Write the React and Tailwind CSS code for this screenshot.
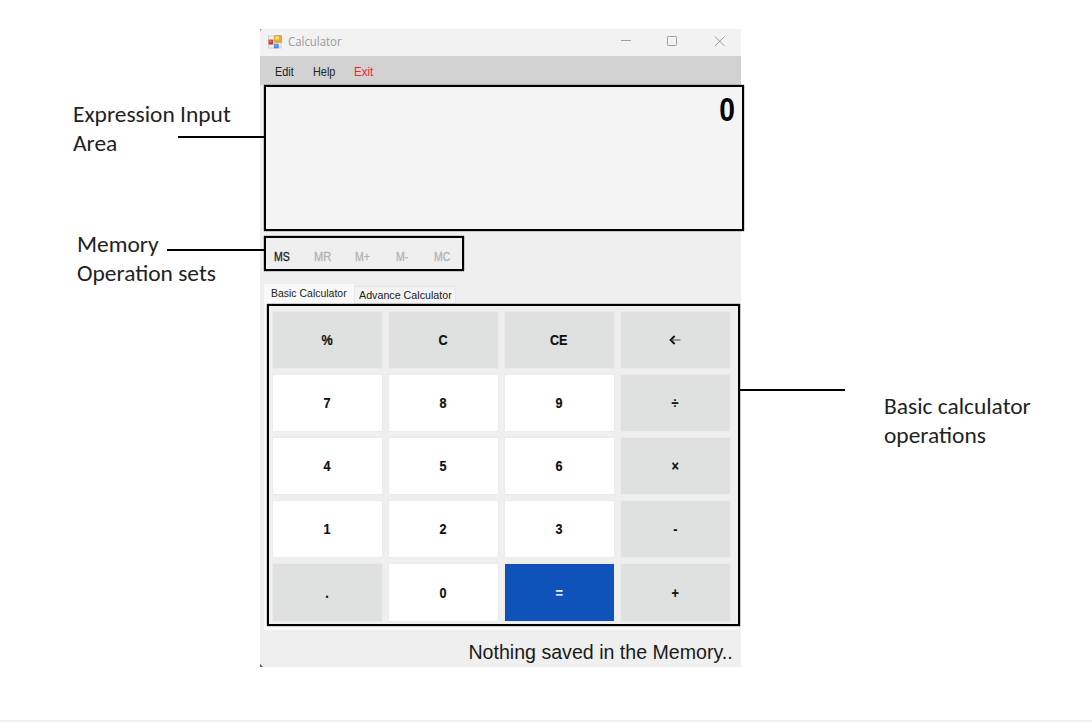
import React from "react";

const keys = [
  ["%", "op"], ["C", "op"], ["CE", "op"], ["←", "back"],
  ["7", "num"], ["8", "num"], ["9", "num"], ["÷", "op"],
  ["4", "num"], ["5", "num"], ["6", "num"], ["×", "op"],
  ["1", "num"], ["2", "num"], ["3", "num"], ["-", "op"],
  [".", "op"], ["0", "num"], ["=", "eq"], ["+", "op"],
];

const tones = {
  op: "bg-[#dfe1e0] text-[#111]",
  back: "bg-[#dfe1e0] text-[#111]",
  num: "bg-white text-[#111]",
  eq: "bg-[#0f52ba] text-[#e4e9f5]",
};

function Key({ label, kind }) {
  return (
    <button className={`flex items-center justify-center border border-[#ebebeb] pr-[1px] text-[14px] leading-none font-bold ${tones[kind]}`}>
      {kind === "back" ? (
        <svg width="12" height="10" viewBox="0 0 12 10" fill="none" stroke="#111" aria-label="Backspace">
          <path d="M5.600 1 1.600 5l4 4" strokeWidth="1.9" />
          <path d="M2 5H11.500" strokeWidth="1" stroke="#444" />
        </svg>
      ) : (
        <span className="inline-block scale-x-[0.9] [-webkit-text-stroke:0.2px]">{label}</span>
      )}
    </button>
  );
}

function FormIcon() {
  return (
    <svg className="-mt-[2px]" width="14" height="14" viewBox="0 0 14 14">
      <rect x=".5" y="1" width="12.5" height="12" fill="#f0f0f0" stroke="#c8c8c8" strokeWidth=".8" />
      <rect x=".6" y="4.600" width="4.600" height="5" fill="#c23f38" />
      <rect x="1.4" y="5.4" width="2" height="2" fill="#df7d70" />
      <rect x="6.3" y=".6" width="7.200" height="7" rx=".6" fill="#e5ae22" stroke="#b9964a" strokeWidth=".6" />
      <rect x="7.2" y="1.4" width="3.8" height="3.2" fill="#fbdc6a" />
      <rect x="5.9" y="8.8" width="4.8" height="4.4" rx=".5" fill="#4a82dc" />
      <rect x="6.7" y="9.5" width="2.4" height="1.8" fill="#85b0f3" />
    </svg>
  );
}

function TitleBar() {
  return (
    <header className="flex h-[27px] items-center bg-[#f2f2f2] pl-2">
      <FormIcon />
      <span className="-mt-[1px] ml-[6px] origin-left scale-x-[0.95] font-['Open_Sans',sans-serif] text-[12px] leading-none text-[#999]">Calculator</span>
      <svg className="-mt-[3px] ml-auto mr-[15px]" width="106" height="12" viewBox="0 0 106 12" fill="none" stroke="#a0a0a0" strokeWidth="1">
        <path d="M1 5.5H11" />
        <rect x="47.5" y="1.5" width="9" height="9" rx=".8" />
        <path d="m95 1.500 9.500 9.500M104.500 1.500 95 11" />
      </svg>
    </header>
  );
}

function CalculatorWindow() {
  return (
    <main className="relative flex h-[638px] w-[481px] flex-col bg-[#efefef]">
      <TitleBar />
      <nav className="flex h-[29px] items-center bg-[#d2d2d2] pl-[15px] pt-[4px] text-[12.5px] leading-none text-[#222]">
        <span className="w-[38px] origin-left scale-x-[0.87]">Edit</span>
        <span className="w-[41px] origin-left scale-x-[0.87]">Help</span>
        <span className="origin-left scale-x-[0.92] text-[#f5222d]">Exit</span>
      </nav>
      <section className="ml-1 flex h-[146px] w-[480px] shrink-0 justify-end border-2 border-black bg-[#f4f4f4] pr-[7px] pt-[6px] text-[34px] leading-[34px] font-bold text-black shadow-[0_0_1px_#000]">
        <span className="-mt-[1px] origin-right scale-x-[0.83]">0</span>
      </section>
      <section className="mt-[5px] ml-1 flex h-[35px] w-[200px] shrink-0 items-center border-2 border-black pl-[8px] pt-[7px] text-[12px] leading-none text-[#b4b4b4] shadow-[0_0_1px_#000]">
        <span className="w-[40px] origin-left scale-x-[0.88] text-[#222] [-webkit-text-stroke:0.3px]">MS</span>
        <span className="w-[41px] origin-left scale-x-[0.93] [-webkit-text-stroke:0.3px]">MR</span>
        <span className="w-[41px] origin-left scale-x-[0.88] [-webkit-text-stroke:0.3px]">M+</span>
        <span className="w-[38px] origin-left scale-x-[0.88] [-webkit-text-stroke:0.3px]">M-</span>
        <span className="origin-left scale-x-[0.88] [-webkit-text-stroke:0.3px]">MC</span>
      </section>
      <div className="mt-[13px] ml-1 flex h-[20px] shrink-0 items-end text-[11.5px] leading-none text-[#222]">
        <div className="h-[20px] w-[90px] bg-[#f9f9f9] pl-[7px] pt-[4px] whitespace-nowrap">
          <span className="inline-block origin-left scale-x-[0.91]">Basic Calculator</span>
        </div>
        <div className="h-[18px] w-[102px] border border-[#e6e6e6] bg-[#f3f3f3] pl-[4px] pt-[3px] whitespace-nowrap">
          <span className="inline-block origin-left scale-x-[0.93]">Advance Calculator</span>
        </div>
      </div>
      <div className="ml-1 mr-[2px] h-[326px] shrink-0 bg-[#f9f9f9] pl-[3px]">
        <section className="grid h-[322px] w-[473px] grid-cols-[repeat(4,111px)] grid-rows-[58px_58px_58px_58px_59px] gap-x-[5px] gap-y-[5px] border-2 border-black bg-[#efefef] pl-[3px] pt-[5px] shadow-[0_0_1px_#000]">
          {keys.map(([label, kind]) => (
            <Key key={label} label={label} kind={kind} />
          ))}
        </section>
      </div>
      <footer className="flex flex-1 items-center justify-end pr-2 pt-[6px] text-[20px] leading-none text-[#1a1a1a]">
        <span className="origin-right scale-x-[0.98] whitespace-nowrap">Nothing saved in the Memory..</span>
      </footer>
      <i className="absolute bottom-0 left-0 size-[3px] bg-[#555] [clip-path:polygon(0_0,100%_100%,0_100%)]" />
      <i className="absolute top-0 left-0 size-[2px] bg-[#999] [clip-path:polygon(0_0,100%_0,0_100%)]" />
    </main>
  );
}

const noteText = "origin-left scale-x-[1.065] whitespace-nowrap font-['Carlito','Lato',sans-serif] text-[22px] leading-[28.5px] text-[#222]";

export default function App() {
  return (
    <div className="relative flex h-[722px] w-[1092px] overflow-hidden border-b-2 border-[#f0f0f4] bg-white pt-[29px] font-['Liberation_Sans',sans-serif]">
      <aside className="w-[260px] shrink-0 pt-[72px]">
        <p className={`ml-[73px] ${noteText}`}>Expression Input<br />Area</p>
        <p className={`mt-[73px] ml-[77px] ${noteText}`}>Memory<br />Operation sets</p>
      </aside>
      <CalculatorWindow />
      <aside className="pt-[364px] pl-[143px]">
        <p className={noteText}>Basic calculator<br />operations</p>
      </aside>
      <i className="absolute top-[136px] left-[178px] h-[2px] w-[87px] bg-black" />
      <i className="absolute top-[249px] left-[167px] h-[2px] w-[98px] bg-black" />
      <i className="absolute top-[389px] left-[739px] h-[2px] w-[106px] bg-black" />
    </div>
  );
}
